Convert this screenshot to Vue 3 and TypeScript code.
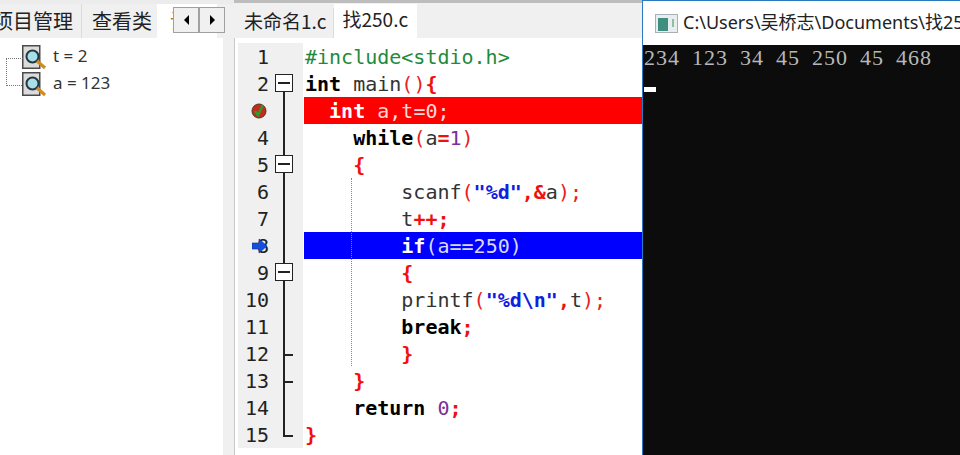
<script setup lang="ts">
type Tok = [string, string]
interface Line {
  n: number
  toks: Tok[]
  fold?: 'f-box' | 'f-first' | 'f-line' | 'f-tick' | 'f-end'
  cls?: string
  marker?: string
}
const lines: Line[] = [
  { n: 1, toks: [['pp', '#include<stdio.h>']] },
  { n: 2, fold: 'f-first', toks: [['kw', 'int'], ['id', ' main'], ['par', '()'], ['sym', '{']] },
  { n: 3, fold: 'f-line', cls: 'hl-red', marker: 'bp', toks: [['kw', '  int'], ['id', ' a,t=0;']] },
  { n: 4, fold: 'f-line', toks: [['kw', '    while'], ['par', '('], ['id', 'a'], ['sym', '='], ['nm', '1'], ['par', ')']] },
  { n: 5, fold: 'f-box', toks: [['sym', '    {']] },
  { n: 6, fold: 'f-line', toks: [['id', '        scanf'], ['par', '('], ['str', '"%d"'], ['sym', ',&'], ['id', 'a'], ['par', ');']] },
  { n: 7, fold: 'f-line', toks: [['id', '        t'], ['sym', '++;']] },
  { n: 8, fold: 'f-line', cls: 'hl-blue', marker: 'arrow', toks: [['kw', '        if'], ['id', '(a==250)']] },
  { n: 9, fold: 'f-box', toks: [['sym', '        {']] },
  { n: 10, fold: 'f-line', toks: [['id', '        printf'], ['par', '('], ['str', '"%d\\n"'], ['sym', ','], ['id', 't'], ['par', ');']] },
  { n: 11, fold: 'f-line', toks: [['kw', '        break'], ['sym', ';']] },
  { n: 12, fold: 'f-tick', toks: [['sym', '        }']] },
  { n: 13, fold: 'f-tick', toks: [['sym', '    }']] },
  { n: 14, fold: 'f-line', toks: [['kw', '    return'], ['id', ' '], ['nm', '0'], ['sym', ';']] },
  { n: 15, fold: 'f-end', toks: [['sym', '}']] },
]
const watches = ['t = 2', 'a = 123']
</script>

<template>
  <div class="screen">
    <section class="left">
      <div class="tabs">
        <span class="tab t1">项目管理</span>
        <span class="tab t2">查看类</span>
        <span class="tab t3">调</span>
        <span class="arrows">
          <span class="arrow-btn"><i class="tri tri-l"></i></span>
          <span class="arrow-btn"><i class="tri tri-r"></i></span>
        </span>
      </div>
      <div class="tree">
        <div v-for="w in watches" :key="w" class="watch">
          <span class="conn"></span>
          <svg class="wicon" width="25" height="24" viewBox="0 0 25 24">
            <rect x="0.75" y="0.75" width="17" height="22.5" fill="#dcdcdc" stroke="#4a4a4a" stroke-width="1.5" />
            <circle cx="10.5" cy="11.5" r="6" fill="#a8dfe8" stroke="#243640" stroke-width="2" />
            <path d="M15 16 L23 23" stroke="#d08a20" stroke-width="3.2" />
          </svg>
          <span class="wtext">{{ w }}</span>
        </div>
      </div>
    </section>

    <section class="editor">
      <div class="etabs">
        <span class="etab">未命名1.c</span>
        <span class="etab active">找250.c</span>
      </div>
      <div class="code">
        <div class="guide"></div>
        <div v-for="l in lines" :key="l.n" class="row">
          <div class="gutter">
            <span class="lineno">{{ l.n === 3 ? '' : l.n }}</span>
            <svg v-if="l.marker === 'bp'" class="marker" width="16" height="16" viewBox="0 0 16 16">
              <circle cx="8" cy="8" r="7" fill="#c8281e" stroke="#4a3a1a" />
              <path d="M4 8 L7 12 L12 2" fill="none" stroke="#2f9a2f" stroke-width="2.6" />
            </svg>
            <svg v-if="l.marker === 'arrow'" class="marker arrow" width="15" height="16" viewBox="0 0 15 16">
              <path d="M0 5 H7 V1 L15 8 L7 15 V11 H0 Z" fill="#1450e0" stroke="#0a2a90" stroke-width="0.6" />
            </svg>
            <span class="fold" :class="l.fold">
              <i v-if="l.fold === 'f-box' || l.fold === 'f-first'" class="box"></i>
            </span>
          </div>
          <div class="text" :class="l.cls">
            <span v-for="(t, i) in l.toks" :key="i" :class="t[0]">{{ t[1] }}</span>
          </div>
        </div>
      </div>
    </section>

    <section class="console">
      <div class="ctitle">
        <svg class="cicon" width="23" height="19" viewBox="0 0 23 19">
          <rect x="0.5" y="0.5" width="22" height="18" fill="#e8edf0" stroke="#a8b0b8" />
          <rect x="3" y="4" width="10" height="13" fill="#3f8f80" />
          <rect x="17" y="5" width="2" height="8" fill="#8fbf9f" />
        </svg>
        <span class="ctext">C:\Users\吴桥志\Documents\找250.exe</span>
      </div>
      <div class="term">
        <div class="out">234 123 34 45 250 45 468</div>
        <div class="cursor"></div>
      </div>
    </section>
  </div>
</template>

<style>
html, body { margin: 0; background: #fff; overflow: hidden; }
</style>

<style scoped>
.screen {
  width: 960px;
  height: 455px;
  display: flex;
  overflow: hidden;
  font-family: "Noto Sans CJK SC", "Noto Sans", sans-serif;
  background: #f0f0f0;
}
.left {
  width: 234px;
  flex: none;
  border-top: 4px solid #ececec;
  box-sizing: border-box;
  overflow: hidden;
}
.tabs {
  height: 34px;
  display: flex;
  align-items: stretch;
  margin-left: -7px;
  font-size: 20px;
  color: #222;
  position: relative;
}
.tab {
  display: flex;
  align-items: center;
  height: 34px;
  box-sizing: border-box;
  background: #f0f0f0;
  line-height: 1;
  white-space: nowrap;
  flex: none;
}
.t1 { width: 88px; }
.t2 { width: 76px; padding-left: 10px; border-left: 1px solid #dcdcdc; }
.t3 { width: 60px; background: #fff; padding-left: 13px; color: #b08040; overflow: hidden; }
.arrows {
  position: absolute;
  left: 180px;
  top: 3px;
  display: flex;
  width: 52px;
  height: 26px;
}
.arrow-btn {
  flex: 1;
  background: #f0f0f0;
  border: 1px solid #a0a0a0;
  box-sizing: border-box;
  display: flex;
  align-items: center;
  justify-content: center;
}
.tri { display: block; border: 5px solid transparent; }
.tri-l { border-right: 5px solid #000; border-left: 0; }
.tri-r { border-left: 5px solid #000; border-right: 0; }
.tree {
  width: 223px;
  height: 417px;
  background: #fff;
  padding-top: 5px;
  box-sizing: border-box;
}
.watch {
  height: 27px;
  display: flex;
  align-items: center;
  position: relative;
  padding-left: 22px;
  font-family: "Noto Sans", sans-serif;
  font-size: 17px;
  color: #333;
}
.wtext { margin-top: -2px; }
.conn {
  position: absolute;
  left: 6px;
  top: 15px;
  width: 16px;
  border-top: 1px dotted #777;
}
.watch:first-child .conn { height: 27px; border-left: 1px dotted #777; }
.wicon { flex: none; margin-right: 6px; }
.editor {
  flex: 1;
  min-width: 0;
  display: flex;
  flex-direction: column;
  background: #f0f0f0;
  overflow: hidden;
  border-top: 3px solid #bdbdbd;
  box-sizing: border-box;
}
.etabs {
  height: 35px;
  display: flex;
  align-items: flex-end;
  padding-left: 2px;
  font-size: 19px;
  color: #222;
}
.etab {
  height: 30px;
  display: flex;
  align-items: center;
  padding: 0 6px 5px 8px;
  box-sizing: border-box;
  background: #f0f0f0;
  border-right: 1px solid #dcdcdc;
  line-height: 1;
}
.etab.active { background: #fff; padding: 0 9px 6px 9px; height: 34px; border-right: 0; }
.code {
  flex: 1;
  background: #fff;
  padding: 5px 0 0 3px;
  border-left: 1px solid #c8c8c8;
  position: relative;
  font-family: "DejaVu Sans Mono", monospace;
  font-size: 20px;
}
.guide {
  position: absolute;
  left: 116px;
  top: 140px;
  height: 188px;
  border-left: 1px dotted #888;
}
.row { display: flex; height: 27px; line-height: 29px; }
.gutter {
  width: 65px;
  flex: none;
  background: #f0f0f0;
  position: relative;
  display: flex;
}
.lineno {
  width: 31px;
  text-align: right;
  color: #222;
}
.marker { position: absolute; left: 13px; top: 6px; }
.marker.arrow { left: 14px; top: 6px; }
.fold { position: absolute; left: 45px; width: 12px; top: 0; bottom: 0; }
.f-line::before, .f-tick::before, .f-box::before, .f-first::before, .f-end::before {
  content: "";
  position: absolute;
  left: 0;
  top: 0;
  bottom: 0;
  border-left: 2px solid #222;
}
.f-first::before { top: 13px; }
.f-end::before { bottom: 12px; }
.f-tick::after, .f-end::after {
  content: "";
  position: absolute;
  left: 0;
  top: 14px;
  width: 10px;
  border-top: 2px solid #222;
}
.box {
  position: absolute;
  left: -8px;
  top: 4px;
  width: 16px;
  height: 16px;
  background: #fff;
  border: 1px solid #222;
}
.box::after {
  content: "";
  position: absolute;
  left: 2px;
  right: 2px;
  top: 7px;
  border-top: 2px solid #222;
}
.text {
  flex: 1;
  white-space: pre;
  margin-left: 1px;
  padding-left: 1px;
  color: #333;
  overflow: hidden;
}
.pp { color: #1e8a3c; }
.kw { font-weight: 700; color: #000; }
.id { color: #333; }
.sym { color: #f01010; font-weight: 700; }
.par { color: #e82020; }
.nm { color: #7a2f9a; }
.str { color: #1020e0; font-weight: 700; }
.hl-red { background: #ff0000; }
.hl-blue { background: #0000ff; }
.hl-red span { color: #fff; }
.hl-blue span { color: #fff; }
.hl-red .id { color: #ffd8d8; }
.hl-blue .id { color: #d8d8ff; }
.console {
  width: 318px;
  flex: none;
  display: flex;
  flex-direction: column;
  border-left: 1px solid #2a7ac0;
  border-top: 1px solid #2a7ac0;
  box-sizing: border-box;
  background: #fff;
  overflow: hidden;
}
.ctitle {
  height: 44px;
  flex: none;
  display: flex;
  align-items: center;
  padding-left: 12px;
  gap: 5px;
  white-space: nowrap;
  font-family: "Noto Sans", "Noto Sans CJK SC", sans-serif;
  font-size: 18px;
  color: #222;
}
.cicon { flex: none; }
.ctext { flex: none; padding-bottom: 4px; }
.term {
  flex: 1;
  background: #0c0c0c;
  padding-left: 1px;
}
.out {
  font-family: "Liberation Serif", serif;
  font-size: 22px;
  letter-spacing: 1px;
  word-spacing: 5.5px;
  margin-top: -1px;
  color: #b8b8b8;
  line-height: 27px;
  white-space: pre;
}
.cursor {
  width: 12px;
  height: 5px;
  background: #fff;
  margin-top: 16px;
}
</style>
